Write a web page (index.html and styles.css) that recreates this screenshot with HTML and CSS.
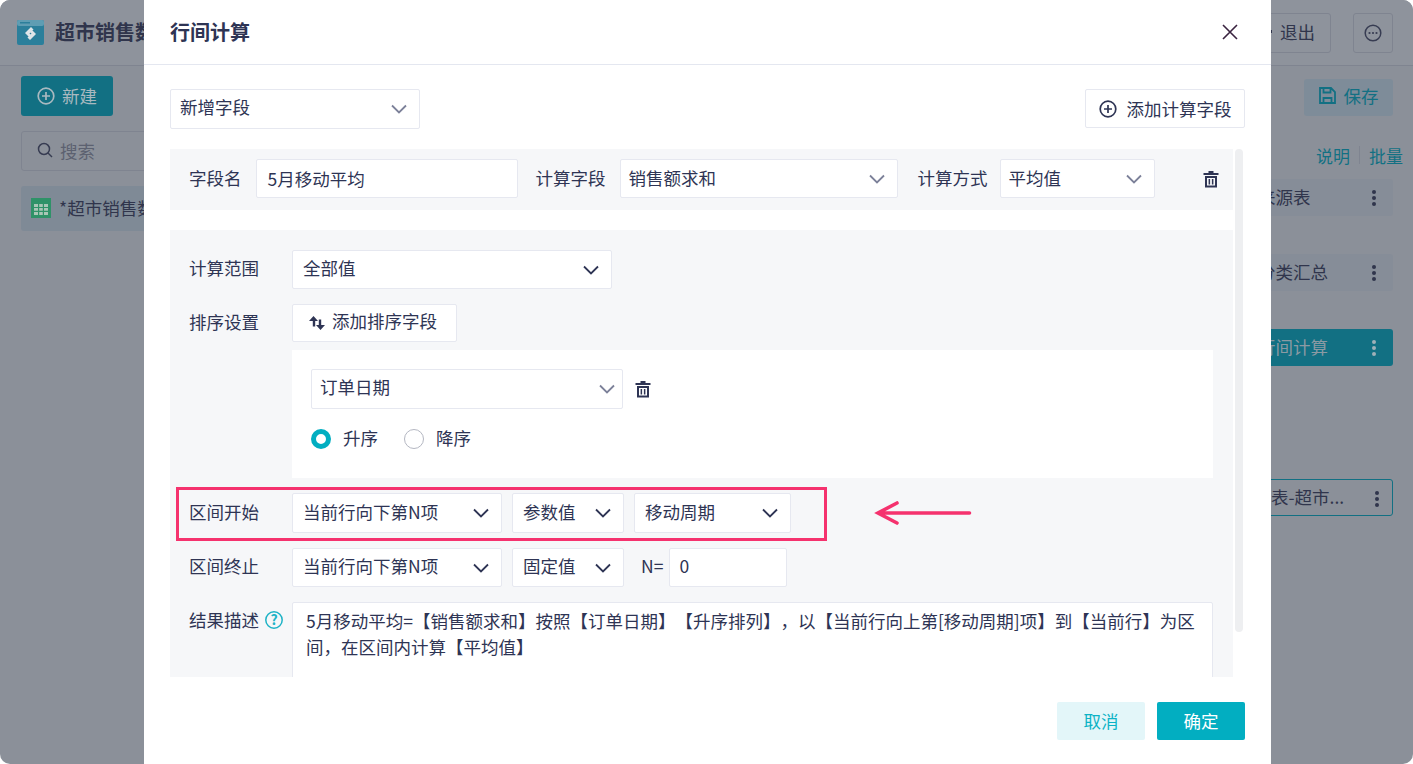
FILE: index.html
```html
<!DOCTYPE html>
<html lang="zh-CN">
<head>
  <meta charset="UTF-8" />
  <title>行间计算</title>
  <link rel="stylesheet" href="styles.css">
</head>
<body>
  <svg class="sprite" width="0" height="0">
    <symbol id="chev" viewBox="0 0 16 10"><path d="M1 1.500l7 7 7-7" fill="none" stroke="currentColor" stroke-width="1.800"/></symbol>
    <symbol id="trash" viewBox="0 0 16 18"><path d="M5.500 1h5v2h5v2H.5V3h5zM2 6h12v11.500H2zm2 2v7.500h8V8zm1.600 1h1.500v5.500H5.600zm3.300 0h1.500v5.500H8.900z" fill="currentColor" fill-rule="evenodd"/></symbol>
    <symbol id="plus" viewBox="0 0 18 18"><circle cx="9" cy="9" r="7.800" fill="none" stroke="currentColor" stroke-width="1.700"/><path d="M9 5v8M5 9h8" stroke="currentColor" stroke-width="1.700"/></symbol>
  </svg>

  <div class="app">
    <header class="app-head">
      <div class="brand">
        <svg class="logo" viewBox="0 0 27 25"><rect width="27" height="25" rx="2" fill="#2b7f9b"/><rect width="27" height="6" rx="2" fill="#5f9db3"/><rect x="3" y="2" width="10" height="1.500" fill="#2b7f9b"/><path d="M14 7l2.500 2.500-4 4 1.500 1.500-2 2-4-4zM13 20l-2.500-2.500 4-4L13 12l2-2 4 4z" fill="#dfe5e8"/></svg>
        <span class="brand-name">超市销售数据</span>
      </div>
      <div class="head-actions">
        <span class="ghost-btn exit-btn"><i class="exit-dot"></i>退出</span>
        <span class="ghost-btn more-btn">
          <svg width="18" height="18" viewBox="0 0 18 18"><circle cx="9" cy="9" r="7.800" fill="none" stroke="#373c52" stroke-width="1.500"/><circle cx="5.500" cy="9" r="1.100" fill="#373c52"/><circle cx="9" cy="9" r="1.100" fill="#373c52"/><circle cx="12.500" cy="9" r="1.100" fill="#373c52"/></svg>
        </span>
      </div>
    </header>
    <div class="app-main">
      <aside class="side">
        <span class="new-btn"><svg width="18" height="18"><use href="#plus"/></svg>新建</span>
        <div class="search">
          <svg width="16" height="16" viewBox="0 0 16 16"><circle cx="7" cy="7" r="5.500" fill="none" stroke="#373c52" stroke-width="1.500"/><path d="M11 11l4 4" stroke="#373c52" stroke-width="1.500"/></svg>
          <span>搜索</span>
        </div>
        <div class="side-item">
          <svg width="20" height="20" viewBox="0 0 20 20"><rect width="20" height="20" fill="#2f9268"/><path d="M3 6h14v11H3z" fill="#a9c6b6"/><path d="M3 9.500h14M3 13.300h14M7.600 6v11M12.400 6v11" stroke="#2f9268" stroke-width="1.200"/></svg>
          <span>*超市销售数据</span>
        </div>
      </aside>
      <section class="steps">
        <span class="save-btn">
          <svg width="17" height="17" viewBox="0 0 17 17"><path d="M1 1h11l4 4v11H1zM4.500 1.500v4h7v-4M4.500 16v-5h8v5" fill="none" stroke="#127083" stroke-width="1.800"/></svg>
          保存
        </span>
        <div class="step-links"><span>说明</span><i></i><span>批量</span></div>
        <div class="step">来源表<b class="dots"></b></div>
        <div class="step">分类汇总<b class="dots"></b></div>
        <div class="step step-active">行间计算<b class="dots"></b></div>
        <div class="step step-out">来源表-超市...<b class="dots"></b></div>
      </section>
    </div>
  </div>

  <div class="modal">
    <div class="modal-head">
      <h2>行间计算</h2>
      <svg class="close" width="16" height="16" viewBox="0 0 16 16"><path d="M1 1l14 14M15 1L1 15" stroke="#3a2340" stroke-width="1.600"/></svg>
    </div>
    <div class="modal-body">
      <div class="top-row">
        <div class="sel w-250 h-40 soft">新增字段<svg class="chev"><use href="#chev"/></svg></div>
        <div class="btn add-calc"><svg width="18" height="18"><use href="#plus"/></svg>添加计算字段</div>
      </div>
      <div class="scroll-wrap">
        <div class="scroll-area">
          <div class="field-bar">
            <label class="lbl-name">字段名</label>
            <div class="inp w-262">5月移动平均</div>
            <label>计算字段</label>
            <div class="sel w-278 tight soft">销售额求和<svg class="chev"><use href="#chev"/></svg></div>
            <label>计算方式</label>
            <div class="sel w-155 tight soft">平均值<svg class="chev"><use href="#chev"/></svg></div>
            <svg class="trash bar-trash"><use href="#trash"/></svg>
          </div>

          <div class="panel">
            <div class="row">
              <label>计算范围</label>
              <div class="sel w-320">全部值<svg class="chev"><use href="#chev"/></svg></div>
            </div>
            <div class="row row-sort">
              <label>排序设置</label>
              <div class="btn add-sort">
                <svg width="18" height="18" viewBox="0 0 18 18"><path d="M5.500 2l4.500 5H7.200v5.500H4.800V7H1zM12.500 16L8 11h2.800V5.500h2.400V11H17z" fill="#2e3454"/></svg>
                添加排序字段
              </div>
            </div>
            <div class="sort-box">
              <div class="sort-line">
                <div class="sel w-312 h-40 tight soft sort-sel">订单日期<svg class="chev"><use href="#chev"/></svg></div>
                <svg class="trash"><use href="#trash"/></svg>
              </div>
              <div class="radios">
                <span class="radio radio-on"></span><span class="radio-txt">升序</span>
                <span class="radio"></span><span class="radio-txt">降序</span>
              </div>
            </div>
            <div class="row row-start">
              <label>区间开始</label>
              <div class="sel w-210 h-40">当前行向下第N项<svg class="chev"><use href="#chev"/></svg></div>
              <div class="sel w-112 h-40">参数值<svg class="chev"><use href="#chev"/></svg></div>
              <div class="sel w-157 h-40">移动周期<svg class="chev"><use href="#chev"/></svg></div>
            </div>
            <div class="row">
              <label>区间终止</label>
              <div class="sel w-210">当前行向下第N项<svg class="chev"><use href="#chev"/></svg></div>
              <div class="sel w-112">固定值<svg class="chev"><use href="#chev"/></svg></div>
              <span class="n-eq">N=</span>
              <div class="inp w-118">0</div>
            </div>
            <div class="row row-desc">
              <label>结果描述
                <svg class="help" width="18" height="18" viewBox="0 0 18 18"><circle cx="9" cy="9" r="8.200" fill="none" stroke="#1fb3c6" stroke-width="1.500"/><text x="9" y="14" text-anchor="middle">?</text></svg>
              </label>
              <div class="desc">5月移动平均=【销售额求和】按照【订单日期】【升序排列】，以【当前行向上第[移动周期]项】到【当前行】为区间，在区间内计算【平均值】</div>
            </div>
          </div>
        </div>
        <div class="scroll-bar"></div>
      </div>
      <div class="modal-foot">
        <span class="foot-btn cancel">取消</span>
        <span class="foot-btn ok">确定</span>
      </div>
    </div>
  </div>

  <!-- annotation drawn on top of the screenshot -->
  <div class="mark"></div>
  <svg class="mark-arrow" width="98" height="26" viewBox="0 0 98 26"><path d="M95.500 13H5M23 3L4 13l19 10" fill="none" stroke="#f5326e" stroke-width="3.600" stroke-linecap="round"/></svg>
</body>
</html>
```

FILE: styles.css
```css
* {
  box-sizing: border-box;
}

html, body {
  margin: 0;
  height: 100%;
}

body {
  position: relative;
  width: 1413px;
  height: 764px;
  overflow: hidden;
  background: #fff;
  font-family: "Noto Sans CJK SC", "Noto Sans", sans-serif;
  font-size: 17.5px;
  color: #2e3454;
  text-spacing-trim: space-all;
}

.sprite {
  position: absolute;
}

/* dimmed page behind the dialog */
.app {
  height: 764px;
  background: #8b9099;
  border-radius: 10px;
  overflow: hidden;
  color: #30354c;
}

.app-head {
  height: 66px;
  display: flex;
  justify-content: space-between;
  align-items: center;
  padding: 0 20px 0 17px;
  border-bottom: 1px solid #7f8490;
  background: #8e939c;
}

.brand {
  display: flex;
  align-items: center;
  gap: 11px;
}

.logo {
  width: 27px;
  height: 25px;
}

.brand-name {
  font-size: 20px;
  font-weight: 700;
  white-space: nowrap;
  padding-bottom: 2px;
}

.head-actions {
  display: flex;
  gap: 22px;
}

.ghost-btn {
  height: 40px;
  border: 1px solid #7f8490;
  border-radius: 3px;
  display: flex;
  align-items: center;
  justify-content: center;
}

.exit-btn {
  width: 120px;
  padding: 0 0 2px 57px;
  gap: 8px;
  justify-content: flex-start;
}

.exit-dot {
  width: 3px;
  height: 3px;
  background: #30354c;
}

.more-btn {
  width: 40px;
}

.app-main {
  display: flex;
  justify-content: space-between;
}

.side {
  width: 260px;
  padding: 10px 0 0 21px;
}

.new-btn {
  width: 92px;
  height: 40px;
  background: #127083;
  border-radius: 3px;
  color: #a9b9c0;
  display: flex;
  align-items: center;
  justify-content: center;
  gap: 7px;
  padding-bottom: 2px;
}

.new-btn svg {
  margin-top: 2px;
}

.search {
  margin-top: 15px;
  height: 40px;
  border: 1px solid #7f8490;
  border-radius: 3px;
  display: flex;
  align-items: center;
  gap: 7px;
  padding: 0 0 2px 15px;
  color: #5c6170;
}

.side-item {
  margin-top: 15px;
  height: 45px;
  background: #7f8a96;
  border-radius: 3px;
  display: flex;
  align-items: center;
  gap: 8px;
  padding: 0 0 2px 10px;
  white-space: nowrap;
}

.steps {
  width: 173px;
  padding: 13px 20px 0 0;
  display: flex;
  flex-direction: column;
}

.save-btn {
  align-self: flex-end;
  width: 89px;
  height: 37px;
  background: #7e8c99;
  border-radius: 3px;
  color: #127083;
  display: flex;
  align-items: center;
  justify-content: center;
  gap: 8px;
  padding-bottom: 4px;
}

.step-links {
  height: 26px;
  margin-top: 26px;
  margin-right: -10px;
  display: flex;
  align-items: center;
  justify-content: flex-end;
  gap: 9px;
  color: #127083;
  font-size: 17px;
}

.step-links i {
  width: 1px;
  height: 18px;
  background: #7f8490;
}

.step {
  position: relative;
  height: 37px;
  margin-top: 38px;
  padding: 0 0 3px 18px;
  border-radius: 3px;
  background: #868d98;
  display: flex;
  align-items: center;
  white-space: nowrap;
}

.step-links + .step {
  margin-top: 11px;
}

.step-active {
  background: #127083;
  color: #8b9aa3;
}

.step-out {
  margin-top: 113px;
  margin-left: -5px;
  padding: 0 0 3px 0;
  background: none;
  border: 1px solid #127083;
}

.dots {
  position: absolute;
  right: 17px;
  top: 11px;
  width: 4px;
  height: 4px;
  border-radius: 50%;
  background: #30354c;
  box-shadow: 0 6px 0 #30354c, 0 12px 0 #30354c;
}

.step-active .dots {
  background: #9fb0b8;
  box-shadow: 0 6px 0 #9fb0b8, 0 12px 0 #9fb0b8;
}

.step-out .dots {
  right: 13px;
}

/* dialog */
.modal {
  position: absolute;
  left: 144px;
  top: 0;
  width: 1127px;
  height: 764px;
  background: #fff;
}

.modal-head {
  height: 65px;
  display: flex;
  justify-content: space-between;
  align-items: center;
  padding: 0 33px 0 26px;
  border-bottom: 1px solid #e4e7f0;
}

.modal-head h2 {
  margin: 0 0 2px;
  font-size: 20px;
  font-weight: 700;
}

.modal-body {
  padding: 24px 26px 0;
}

.top-row {
  display: flex;
  justify-content: space-between;
  align-items: flex-start;
}

.sel, .inp, .btn {
  background: #fff;
  border: 1px solid #e6e8f0;
  border-radius: 2px;
  height: 39px;
  display: flex;
  align-items: center;
  white-space: nowrap;
}

.sel {
  position: relative;
  padding: 0 0 4px 10px;
}

.tight {
  padding-left: 8px;
}

.chev {
  position: absolute;
  right: 12px;
  top: 50%;
  margin-top: -5px;
  width: 16px;
  height: 10px;
  color: #2e3454;
}

.soft .chev {
  color: #7c8199;
}

.h-40 { height: 40px; }
.w-250 { width: 250px; padding: 0 0 6px 9px; }
.w-262 { width: 262px; }
.w-278 { width: 278px; }
.w-155 { width: 155px; }
.w-320 { width: 320px; }
.w-312 { width: 312px; }
.w-210 { width: 210px; }
.w-112 { width: 112px; }
.w-157 { width: 157px; }
.w-118 { width: 118px; }

.sort-sel {
  padding-bottom: 6px;
}

.sort-sel .chev {
  right: 7px;
}

.btn {
  gap: 10px;
  justify-content: center;
}

.add-calc {
  width: 160px;
}

.add-sort {
  width: 165px;
  height: 38px;
  gap: 6px;
  padding: 0 4px 5px 0;
}

.add-sort svg {
  margin-top: 5px;
}

.scroll-wrap {
  display: flex;
  align-items: flex-start;
  gap: 2px;
  margin-top: 20px;
}

.scroll-area {
  width: 1063px;
  height: 528px;
  overflow: hidden;
}

.scroll-bar {
  width: 8px;
  height: 483px;
  border-radius: 4px;
  background: #eeeff1;
}

.field-bar {
  height: 61px;
  background: #f6f7f9;
  display: flex;
  align-items: center;
  padding: 0 0 2px 20px;
}

.field-bar label {
  margin: 0 14px 0 20px;
  padding-bottom: 2px;
}

.field-bar .lbl-name {
  margin: 0 14px 0 -1px;
}

.field-bar label:nth-of-type(2) {
  margin-left: 18px;
}

.field-bar label:nth-of-type(3) {
  margin-right: 12px;
}

.field-bar .sel {
  padding-bottom: 3px;
}

.field-bar .inp {
  padding-left: 11px;
}

.field-bar .w-155 {
  margin-right: 48px;
}

.trash {
  flex: none;
  width: 16px;
  height: 18px;
  color: #2e3454;
}

.panel {
  margin-top: 20px;
  background: #f6f7f9;
  padding: 20px 20px 30px;
}

.row {
  display: flex;
  align-items: center;
  gap: 10px;
  margin-bottom: 15px;
}

.row label {
  width: 93px;
  margin: 0 0 0 -1px;
  padding-bottom: 4px;
  flex: none;
  white-space: nowrap;
}

.row .inp {
  padding: 0 0 4px 9px;
}

.row-sort {
  margin-bottom: 8px;
}

.row-start {
  margin-top: 15px;
}

.row-desc {
  align-items: flex-start;
}

.row-desc label {
  display: flex;
  align-items: center;
  gap: 6px;
  padding: 5px 0 0;
}

.help {
  flex: none;
}

.help text {
  font-size: 14px;
  font-weight: 700;
  fill: #1fb3c6;
}

.n-eq {
  margin: 0 -4px 4px 7px;
}

.sort-box {
  margin-left: 102px;
  height: 128px;
  background: #fff;
  padding: 19px 0 0 19px;
}

.sort-line {
  display: flex;
  align-items: center;
  gap: 12px;
}

.radios {
  display: flex;
  align-items: center;
  margin-top: 16px;
}

.radio {
  width: 20px;
  height: 20px;
  border-radius: 50%;
  border: 1px solid #b4b7c2;
  background: #fff;
}

.radio-on {
  border: 5.5px solid #02aec1;
}

.radio-txt {
  margin: 0 26px 3px 12px;
}

.desc {
  width: 921px;
  height: 140px;
  background: #fff;
  border: 1px solid #e6e8f0;
  border-radius: 2px;
  padding: 5px 12px 5px 13px;
  line-height: 26px;
}

.modal-foot {
  display: flex;
  justify-content: flex-end;
  gap: 12px;
  margin-top: 25px;
}

.foot-btn {
  width: 88px;
  height: 38px;
  border-radius: 2px;
  display: flex;
  align-items: center;
  justify-content: center;
  padding-bottom: 2px;
}

.cancel {
  background: #e3f6f9;
  color: #0bb3c6;
}

.ok {
  background: #02aec1;
  color: #fff;
}

/* pink annotation */
.mark {
  position: absolute;
  left: 176px;
  top: 487px;
  width: 651px;
  height: 54px;
  border: 3px solid #f5326e;
}

.mark-arrow {
  position: absolute;
  left: 874px;
  top: 500px;
}
```
